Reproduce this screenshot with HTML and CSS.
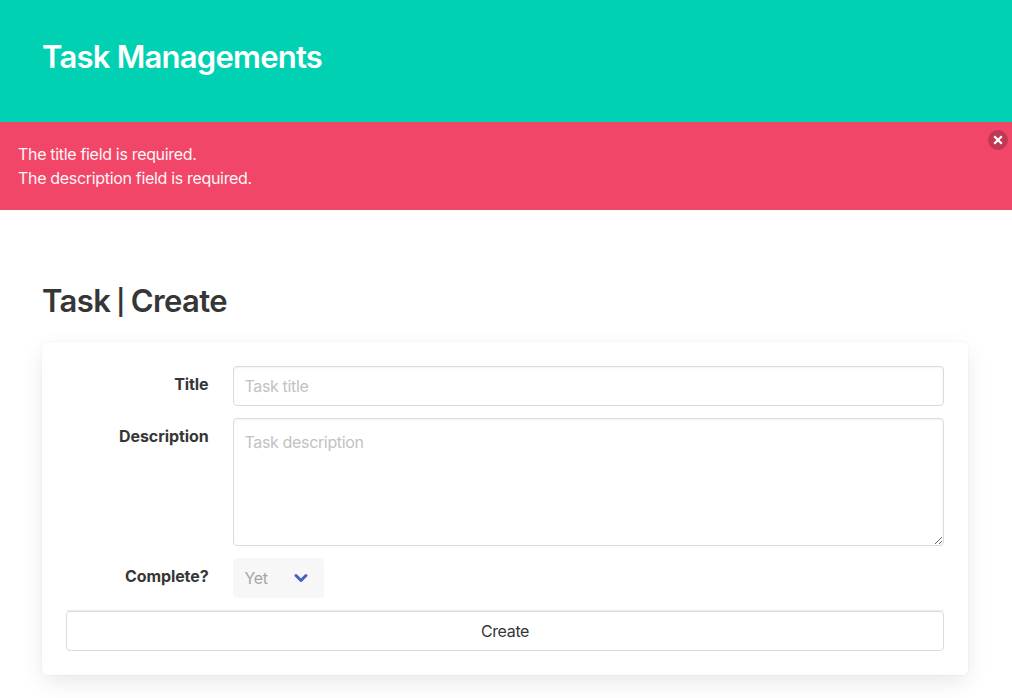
FILE: index.html
```html
<!DOCTYPE html>
<html lang="en">
<head>
<meta charset="utf-8">
<title>Task Managements</title>
<link rel="stylesheet" href="styles.css">
</head>
<body>
<header class="hero"><h1 class="title">Task Managements</h1></header>
<div class="notification">
<button class="delete" aria-label="Close"><svg viewBox="0 0 20 20" width="20" height="20"><path d="M6.2 6.2l7.6 7.6M13.8 6.2l-7.6 7.6" stroke="#fff" stroke-width="2.2"/></svg></button>
<p>The title field is required.</p>
<p>The description field is required.</p>
</div>
<main class="section">
<h2 class="title page-title">Task <span class="divider">|</span> Create</h2>
<form class="box">
<div class="field"><label class="label" for="title">Title</label><input class="input" id="title" placeholder="Task title"></div>
<div class="field"><label class="label" for="description">Description</label><textarea class="input textarea" id="description" placeholder="Task description"></textarea></div>
<div class="field"><span class="label">Complete?</span><div class="select"><span>Yet</span><svg width="14" height="10" viewBox="0 0 14 10"><path d="M2 2.5l5 5 5-5" fill="none" stroke="#485fc7" stroke-width="3" stroke-linecap="round" stroke-linejoin="round"/></svg></div></div>
<div class="actions"><button class="submit" type="button">Create</button></div>
</form>
</main>
</body>
</html>
```
FILE: styles.css
```css
* { box-sizing: border-box; margin: 0; padding: 0; }
body { font: 16px/24px Inter, sans-serif; color: #363636; background: #fff; height: 698px; overflow: hidden; }
.hero { background: #00d1b2; color: #fff; height: 122px; padding: 39px 42px; }
.title { font-size: 31px; line-height: 36px; font-weight: 600; letter-spacing: -.76px; }
.page-title { letter-spacing: -.6px; word-spacing: -1.2px; }
.divider { font-size: 25px; vertical-align: 1px; line-height: 1; }
.notification { position: relative; background: #f14668; color: #fff; height: 88px; padding: 20px 18px; letter-spacing: -.32px; }
.notification p { opacity: .95; }
.delete { position: absolute; right: 4px; top: 8px; width: 20px; height: 20px; border: 0; border-radius: 50%; background: #c13853; }
.delete svg { display: block; }
.section { padding: 73px 44px 0 42px; }
.box { margin-top: 23px; height: 333px; padding: 24px; border-radius: 6px; box-shadow: 0 8px 24px -2px rgba(10,10,10,.1), 0 0 0 1px rgba(10,10,10,.02); }
.field { display: flex; gap: 24px; margin-bottom: 12px; }
.label { width: 142.5px; padding-top: 6px; text-align: right; font-weight: 700; letter-spacing: -.1px; }
.input { flex: 1; height: 40px; min-width: 0; padding: 0 11px; border: 1px solid #dbdbdb; border-radius: 4px; font: inherit; letter-spacing: -.35px; background: #fff; box-shadow: inset 0 1px 2px rgba(10,10,10,.05); }
.input::placeholder { color: #c2c2c2; }
.textarea { height: 128px; padding: 11px; resize: vertical; }
.select { display: flex; align-items: center; justify-content: space-between; width: 91.5px; height: 40px; padding: 0 16px 0 12px; border-radius: 4px; background: #f7f7f7; color: #a5a5a5; letter-spacing: -.3px; }
.actions { border-top: 1px solid #ebebeb; }
.submit { display: block; width: 100%; height: 40px; border: 1px solid #dbdbdb; border-radius: 4px; background: #fff; color: #363636; font: inherit; letter-spacing: -.35px; }
```
